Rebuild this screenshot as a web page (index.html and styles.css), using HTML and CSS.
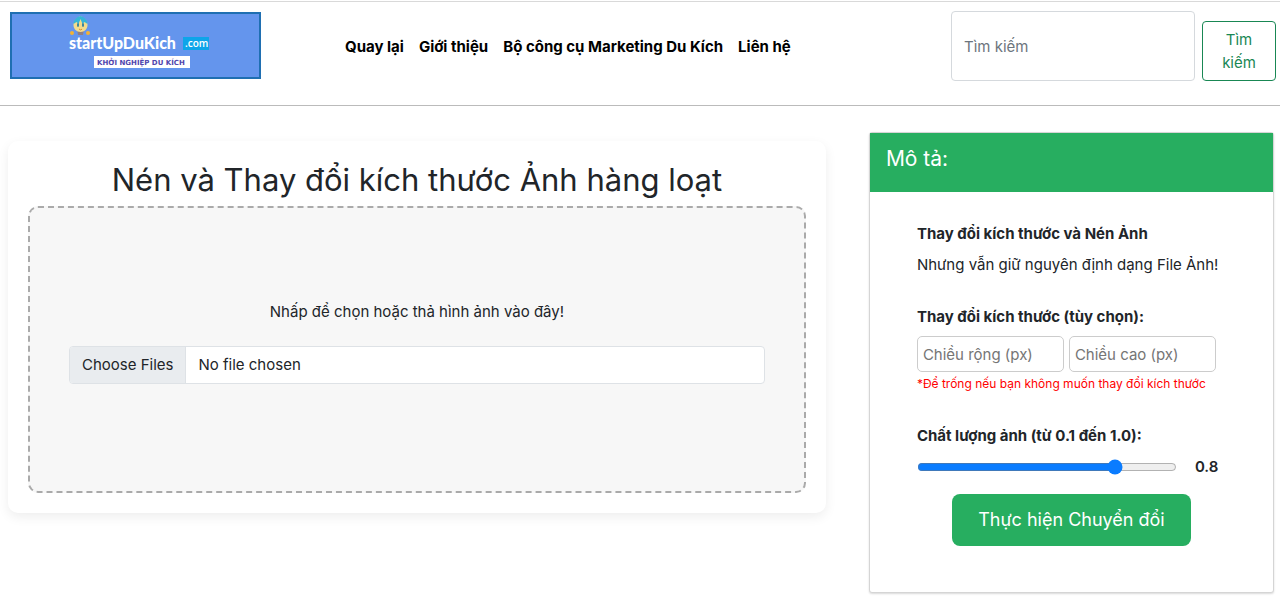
FILE: index.html
```
<!DOCTYPE html>
<html lang="vi">

<head>
    <meta charset="UTF-8">
    <meta name="viewport" content="width=device-width, initial-scale=1.0">
    <title>Nén và Thay đổi kích thước Ảnh hàng loạt</title>
    <link rel="stylesheet" href="styles.css">
</head>

<body>
    <header class="site-header">
        <a class="logo" href="#" aria-label="startUpDuKich.com">
            <svg viewBox="0 0 251 67" width="251" height="67">
                <rect x="1" y="1" width="249" height="65" fill="#6495ed" stroke="#1f6fb2" stroke-width="2"/>
                <!-- mascot -->
                <path d="M67 17h7l-1 6h-5z" fill="#8d7f86"/>
                <path d="M70.500 4c4 2 7 5 7 9s-3 7-7 7-7-3-7-7 3-7 7-9z" fill="#f3dc8c"/>
                <path d="M63.500 12c0-4 3-7 7-8 4 1 7 4 7 8l-3-2-2 2-2-5-2 5-2-2z" fill="#36b5d8"/>
                <ellipse cx="68" cy="13" rx="1" ry="2" fill="#2f7f9c"/>
                <ellipse cx="73" cy="13" rx="1" ry="2" fill="#2f7f9c"/>
                <path d="M69 17q2 2 3 0" stroke="#d98b2b" fill="none"/>
                <circle cx="62" cy="21" r="2" fill="#f2b233"/>
                <circle cx="78" cy="21" r="2" fill="#f2b233"/>
                <text class="logo-name" x="59" y="37">startUpDuKich</text>
                <rect x="173" y="25" width="26" height="13" fill="#0ea5e9"/>
                <text class="logo-com" x="175" y="35">.com</text>
                <rect x="84" y="44" width="96" height="12" fill="#fff"/>
                <text class="logo-tagline" x="87" y="53">KHỞI NGHIỆP DU KÍCH</text>
            </svg>
        </a>
        <nav class="main-nav">
            <a href="#">Quay lại</a>
            <a href="#">Giới thiệu</a>
            <a href="#">Bộ công cụ Marketing Du Kích</a>
            <a href="#">Liên hệ</a>
        </nav>
        <form class="search-form">
            <input class="search-input" type="search" placeholder="Tìm kiếm" aria-label="Tìm kiếm">
            <button class="search-button" type="submit">Tìm kiếm</button>
        </form>
    </header>

    <main class="content">
        <section class="upload-card">
            <h1 class="upload-title">Nén và Thay đổi kích thước Ảnh hàng loạt</h1>
            <div class="drop-area">
                <label class="drop-label" for="images">Nhấp để chọn hoặc thả hình ảnh vào đây!</label>
                <input class="file-input" type="file" id="images" accept="image/*" multiple>
            </div>
        </section>

        <aside class="options-card">
            <h2 class="options-header">Mô tả:</h2>
            <div class="options-body">
                <p class="option-title">Thay đổi kích thước và Nén Ảnh</p>
                <p class="option-text">Nhưng vẫn giữ nguyên định dạng File Ảnh!</p>

                <p class="option-title">Thay đổi kích thước (tùy chọn):</p>
                <div class="size-fields">
                    <input class="size-input" type="number" placeholder="Chiều rộng (px)" aria-label="Chiều rộng (px)">
                    <input class="size-input" type="number" placeholder="Chiều cao (px)" aria-label="Chiều cao (px)">
                </div>
                <p class="note">*Để trống nếu bạn không muốn thay đổi kích thước</p>

                <label class="option-title" for="quality">Chất lượng ảnh (từ 0.1 đến 1.0):</label>
                <div class="quality-row">
                    <input class="quality-range" type="range" id="quality" min="0.1" max="1" step="0.1" value="0.8">
                    <output class="quality-value" for="quality">0.8</output>
                </div>
                <button class="convert-button" type="button">Thực hiện Chuyển đổi</button>
            </div>
        </aside>
    </main>
    <script>
        const range = document.querySelector('.quality-range');
        range.addEventListener('input', () => {
            document.querySelector('.quality-value').textContent = range.value;
        });
    </script>
</body>

</html>
```
FILE: styles.css
```
* {
    box-sizing: border-box;
}

body {
    margin: 0;
    font-family: "Inter", "Noto Sans", sans-serif;
    font-size: 15px;
    line-height: 24px;
    color: #212529;
    background-color: #fff;
}

h1,
h2,
p {
    margin: 0;
    font-weight: 400;
}

input,
button {
    font-family: inherit;
    font-size: inherit;
    line-height: inherit;
    color: inherit;
}

.site-header {
    display: flex;
    align-items: flex-start;
    margin-top: 1px;
    padding: 9px 4px 24px 10px;
    border-top: 1px solid #d9d9d9;
    border-bottom: 1px solid #bbb;
}

.logo {
    display: block;
    flex-shrink: 0;
    margin-top: 1px;
}

.logo svg {
    display: block;
}

.logo-name {
    font-family: "Lato", sans-serif;
    font-size: 16px;
    font-weight: 900;
    fill: #fff;
}

.logo-com {
    font-family: "Open Sans", sans-serif;
    font-size: 10px;
    font-weight: 600;
    fill: #fff;
}

.logo-tagline {
    font-family: "DejaVu Sans", sans-serif;
    font-size: 7px;
    font-weight: 700;
    fill: #5145ad;
}

.main-nav {
    display: flex;
    gap: 15px;
    flex-grow: 1;
    padding: 24px 16px 0 84px;
    font-weight: 700;
    white-space: nowrap;
}

.main-nav a {
    color: #000;
    text-decoration: none;
}

.search-form {
    display: flex;
    align-items: flex-end;
    gap: 7px;
}

.search-input {
    width: 244px;
    height: 70px;
    padding: 6px 12px;
    border: 1px solid #d5d9dd;
    border-radius: 4px;
    background-color: #fff;
}

.search-input::placeholder {
    color: #6c757d;
}

.search-button {
    width: 74px;
    padding: 6px 12px;
    border: 1px solid #198754;
    border-radius: 4px;
    line-height: 23px;
    color: #198754;
    background-color: #fff;
}

.content {
    display: grid;
    grid-template-columns: 1fr 32%;
    align-items: start;
    gap: 43px;
    padding: 26px 6px 6px 8px;
}

.upload-card {
    margin-top: 9px;
    padding: 20px;
    border-radius: 10px;
    background-color: #fff;
    box-shadow: 0 4px 12px rgba(0, 0, 0, 0.07);
    text-align: center;
}

.upload-title {
    margin-bottom: 7px;
    font-size: 31px;
    line-height: 38px;
}

.drop-area {
    display: flex;
    flex-direction: column;
    justify-content: center;
    gap: 22px;
    min-height: 287px;
    padding: 16px 39px 32px;
    border: 2px dashed #aaa;
    border-radius: 10px;
    background-color: #f7f7f7;
}

.file-input {
    width: 100%;
    padding: 6px 12px;
    border: 1px solid #dee2e6;
    border-radius: 4px;
    background-color: #fff;
}

.file-input::file-selector-button {
    margin: -6px 12px -6px -12px;
    padding: 6px 12px;
    border: 0;
    border-right: 1px solid #dee2e6;
    font: inherit;
    color: inherit;
    background-color: #e9ecef;
}

.options-card {
    border: 1px solid #d5d5d5;
    border-radius: 3px;
    background-color: #fff;
    box-shadow: 0 1px 2px rgba(0, 0, 0, 0.15);
}

.options-header {
    padding: 12px 16px 20px;
    font-size: 21px;
    line-height: 27px;
    color: #fff;
    background-color: #27ae60;
}

.options-body {
    display: flex;
    flex-direction: column;
    padding: 30px 47px 46px;
}

.option-title {
    font-weight: 700;
}

.option-text {
    margin: 7px 0 28px;
    white-space: nowrap;
}

.size-fields {
    display: flex;
    gap: 5px;
    margin-top: 7px;
}

.size-input {
    width: 147px;
    height: 36px;
    padding: 5px;
    border: 1px solid #ccc;
    border-radius: 5px;
}

.size-input::placeholder {
    color: #757575;
}

.note {
    margin-bottom: 28px;
    font-size: 12px;
    color: #f00;
    white-space: nowrap;
}

.quality-row {
    display: flex;
    align-items: center;
    gap: 18px;
    margin: 7px 0 15px;
}

.quality-range {
    width: 260px;
    margin: 0;
    accent-color: #0a7cff;
}

.quality-value {
    font-weight: 600;
}

.convert-button {
    align-self: center;
    padding: 14px 26px;
    border: 0;
    border-radius: 8px;
    font-size: 18px;
    color: #fff;
    background-color: #27ae60;
}
```
